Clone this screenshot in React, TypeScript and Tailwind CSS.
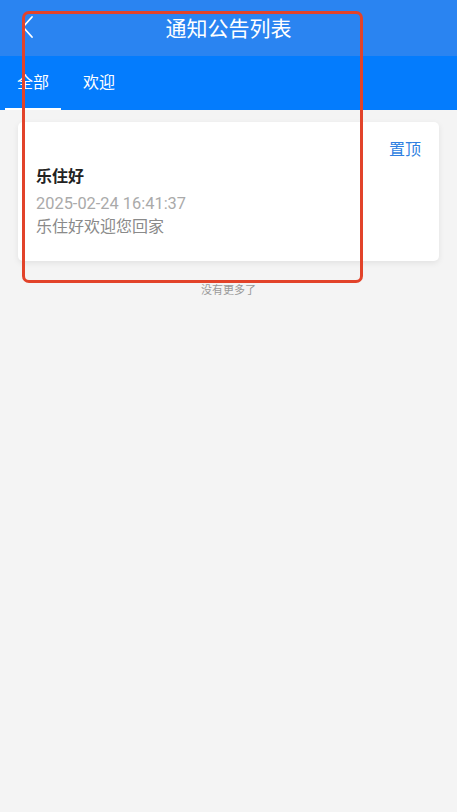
import { useState } from 'react';

type Notice = {
  id: number;
  title: string;
  time: string;
  content: string;
};

const notices: Notice[] = [
  { id: 1, title: '乐住好', time: '2025-02-24 16:41:37', content: '乐住好欢迎您回家' },
];

const tabs = ['全部', '欢迎'];

export default function App() {
  const [active, setActive] = useState(0);

  return (
    <div
      className="relative min-h-[812px] bg-[#f4f4f4]"
      style={{ fontFamily: '"Noto Sans CJK SC", "Noto Sans", Roboto, sans-serif' }}
    >
      {/* header */}
      <div className="relative flex h-[56px] items-center justify-center bg-[#2a84f1]">
        <button className="absolute left-[20px] top-[14px] text-white">
          <svg width="16" height="26" viewBox="0 0 16 26" fill="none">
            <path d="M12 3 L3 13 L12 23" stroke="white" strokeWidth="1.8" strokeLinecap="round" strokeLinejoin="round" />
          </svg>
        </button>
        <h1 className="mb-[2px] text-[21px] font-normal leading-none text-white">通知公告列表</h1>
      </div>

      {/* tabs */}
      <div className="flex h-[54px] items-stretch bg-[#047cfd] pl-[5px]">
        {tabs.map((t, i) => (
          <button
            key={t}
            onClick={() => setActive(i)}
            className={
              'relative flex w-[56px] items-center justify-center pb-[4px] text-[16px] text-white' +
              (i > 0 ? ' ml-[10px]' : '')
            }
          >
            {t}
            {active === i && <span className="absolute bottom-0 left-0 h-[2px] w-full bg-white" />}
          </button>
        ))}
      </div>

      {/* list */}
      <div className="px-[18px] pt-[12px]">
        {notices.map((n) => (
          <div
            key={n.id}
            className="rounded-[5px] bg-white px-[18px] pb-[26px] pt-[14px] shadow-[0_2px_6px_rgba(0,0,0,0.08)]"
          >
            <div className="flex justify-end">
              <span className="text-[16px] text-[#2f7fe1]">置顶</span>
            </div>
            <div className="mt-[4px] text-[16px] font-bold leading-[22px] text-[#222]">{n.title}</div>
            <div
              className="mt-[7px] text-[16.4px] leading-[22px] text-[#aaaaaa]"
              style={{ fontFamily: 'Roboto, "Noto Sans CJK SC", sans-serif' }}
            >
              {n.time}
            </div>
            <div className="mt-0 text-[16px] leading-[20px] text-[#8a8a8a]">{n.content}</div>
          </div>
        ))}
        <div className="mt-[20px] text-center text-[11px] text-[#999]">没有更多了</div>
      </div>

      {/* annotation frame */}
      <div className="pointer-events-none absolute left-[22px] top-[11px] h-[272px] w-[341px] rounded-[7px] border-[3px] border-[#e2432a]" />
    </div>
  );
}
